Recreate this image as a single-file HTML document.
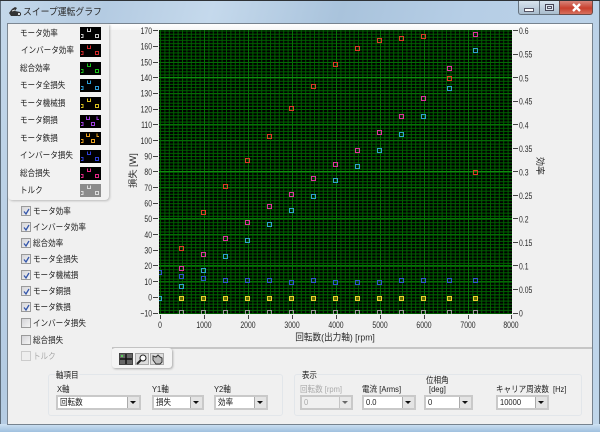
<!DOCTYPE html>
<html><head><meta charset="utf-8"><style>
html,body{margin:0;padding:0;width:600px;height:432px;overflow:hidden;background:#b9d1e8}
body{position:relative;font-family:"Liberation Sans","Noto Sans CJK JP",sans-serif;color:#222}
div,span{position:absolute;box-sizing:border-box}
.t{white-space:nowrap;font-size:8.7px;line-height:10px;height:10px;transform:scaleX(.87);transform-origin:0 50%}
.cb{left:21px;width:10px;height:10px;border:1px solid #9a9a9a;background:linear-gradient(135deg,#d4d4d8,#f4f4f4)}
.cb svg{position:absolute;left:0;top:0}
.sw{left:80px;width:21px;height:13px;background:#000}
.sw svg{position:absolute;left:0;top:0}
.cmb{height:15px;top:395px;background:#fff;border:2px solid #c9c9c9;outline:0}
.cmb i{position:absolute;right:0;top:0;width:11px;height:11px;background:#e4e4e4;border-left:1px solid #aaa}
.cmb i:after{content:"";position:absolute;left:2px;top:4px;border:3px solid transparent;border-top:3px solid #111;border-bottom:0}
.cmb span{left:2px;top:0;font-size:8.7px;line-height:11px;white-space:nowrap;transform:scaleX(.87);transform-origin:0 50%}
.grp{border:1px solid #e2e6ea;border-radius:3px;top:374px;height:42px}
.tb{top:353px;width:14px;height:12px;border:1px solid #aaa;background:#ddd}
</style></head><body>
<div style="left:0;top:0;width:600px;height:432px;background:linear-gradient(105deg,#c4d8ea 0%,#b4cbe2 15%,#c5d9ec 30%,#a9c3dc 48%,#b6cee6 66%,#c0d6ea 100%)"></div>
<div style="left:0;top:0;width:600px;height:1px;background:#2e3236"></div>
<div style="left:0;top:1px;width:1px;height:431px;background:#5d6c7a"></div>
<div style="left:599px;top:1px;width:1px;height:431px;background:#5d6c7a"></div>
<div style="left:0;top:424px;width:600px;height:8px;background:linear-gradient(#cfe2f3,#9fc0de)"></div>
<div style="left:7px;top:23px;width:586px;height:402px;background:#f0f0f0;border:1px solid #77838f"></div>
<div style="left:8px;top:24px;width:584px;height:6px;background:linear-gradient(#fff,#f6f6f6)"></div>

<svg style="position:absolute;left:8px;top:6px" width="14" height="11" viewBox="0 0 14 11"><path d="M1 7l3-4 3-2 2 1-2 3 5 1 1 3-4 1H3z" fill="#333"/><path d="M4 5l3-1" stroke="#ddd" stroke-width="1"/><circle cx="11" cy="8" r="1.6" fill="#eee" stroke="#333"/></svg>
<span class="t" style="left:23px;top:7px;font-size:9.8px;line-height:12px;height:12px;color:#2a2a2a;transform:scaleX(.9)">スイープ運転グラフ</span>

<div style="left:518px;top:1px;width:22px;height:14px;background:linear-gradient(#d8e4ee,#a9bccd);border:1px solid #66727e;border-top:0;border-radius:0 0 0 3px"></div>
<div style="left:525px;top:9px;width:8px;height:2px;background:#fff;border:0;outline:1px solid #556"></div>
<div style="left:540px;top:1px;width:19px;height:14px;background:linear-gradient(#d8e4ee,#a9bccd);border-bottom:1px solid #66727e"></div>
<div style="left:545px;top:4px;width:9px;height:7px;border:1px solid #445;background:#dfe8f0"></div>
<div style="left:547px;top:6px;width:5px;height:3px;border:1px solid #556"></div>
<div style="left:559px;top:1px;width:34px;height:14px;background:linear-gradient(#d8857a,#c8402e 55%,#d7705e);border:1px solid #6e4a46;border-top:0;border-radius:0 0 3px 0"></div>
<svg style="position:absolute;left:571px;top:3px" width="11" height="10"><path d="M2 1l7 7M9 1L2 8" stroke="#fff" stroke-width="2.4"/></svg>

<svg style="position:absolute;left:0;top:0" width="600" height="432" viewBox="0 0 600 432">
<defs>
<pattern id="v" x="160" y="0" width="44" height="10" patternUnits="userSpaceOnUse"><path d="M.5 0v10M4.9 0v10M9.3 0v10M13.7 0v10M18.1 0v10M22.5 0v10M26.9 0v10M31.3 0v10M35.7 0v10M40.1 0v10" stroke="#005c00" stroke-width="1"/></pattern>
<pattern id="h" x="0" y="30.5" width="10" height="15.7" patternUnits="userSpaceOnUse"><path d="M0 .5h10M0 3.64h10M0 6.78h10M0 9.92h10M0 13.06h10" stroke="#006400" stroke-width="1"/></pattern>
<clipPath id="c"><rect x="159" y="30" width="353" height="284"/></clipPath>
</defs>
<rect x="159" y="30" width="353" height="284" fill="#000"/>
<rect x="159" y="30" width="353" height="284" fill="url(#v)"/>
<rect x="159" y="30" width="353" height="284" fill="url(#h)"/>
<g shape-rendering="crispEdges">
<path d="M204.5 30v284M248.5 30v284M292.5 30v284M336.5 30v284M380.5 30v284M424.5 30v284M468.5 30v284" stroke="#067206" fill="none"/>
<path d="M159 62.5h353M159 93.5h353M159 140.5h353M159 187.5h353M159 234.5h353M159 281.5h353" stroke="#056a05" fill="none"/>
<path d="M159 124.5h353M159 218.5h353M159 265.5h353" stroke="#067006" fill="none"/>
<path d="M159 77.5h353M159 171.5h353" stroke="#0f8c0f" fill="none"/>
<path d="M153 30.5h5M153 46.5h5M153 62.5h5M153 77.5h5M153 93.5h5M153 109.5h5M153 124.5h5M153 140.5h5M153 156.5h5M153 171.5h5M153 187.5h5M153 203.5h5M153 218.5h5M153 234.5h5M153 250.5h5M153 265.5h5M153 281.5h5M153 297.5h5M153 313.5h5" stroke="#444"/>
<path d="M513 30.5h5M513 54.5h5M513 77.5h5M513 101.5h5M513 124.5h5M513 148.5h5M513 171.5h5M513 195.5h5M513 218.5h5M513 242.5h5M513 265.5h5M513 289.5h5M513 313.5h5" stroke="#444"/>
<path d="M160.5 315v4M204.5 315v4M248.5 315v4M292.5 315v4M336.5 315v4M380.5 315v4M424.5 315v4M468.5 315v4M511.5 315v4" stroke="#444"/>
<g clip-path="url(#c)">
<path fill="none" stroke="#9a9a9a" d="M179.5 310.5h4v4h-4zM201.5 310.5h4v4h-4zM223.5 310.5h4v4h-4zM245.5 310.5h4v4h-4zM267.5 310.5h4v4h-4zM289.5 310.5h4v4h-4zM311.5 310.5h4v4h-4zM333.5 310.5h4v4h-4zM355.5 310.5h4v4h-4zM377.5 310.5h4v4h-4zM399.5 310.5h4v4h-4zM421.5 310.5h4v4h-4zM447.5 310.5h4v4h-4zM473.5 310.5h4v4h-4z"/>
<path fill="#5a6a00" stroke="#f0d030" d="M179.5 296.5h4v4h-4zM201.5 296.5h4v4h-4zM223.5 296.5h4v4h-4zM245.5 296.5h4v4h-4zM267.5 296.5h4v4h-4zM289.5 296.5h4v4h-4zM311.5 296.5h4v4h-4zM333.5 296.5h4v4h-4zM355.5 296.5h4v4h-4zM377.5 296.5h4v4h-4zM399.5 296.5h4v4h-4zM421.5 296.5h4v4h-4zM447.5 296.5h4v4h-4zM473.5 296.5h4v4h-4z"/>
<path fill="none" stroke="#3050d0" d="M157.5 270.5h4v4h-4zM179.5 274.5h4v4h-4zM201.5 276.5h4v4h-4zM223.5 278.5h4v4h-4zM245.5 278.5h4v4h-4zM267.5 278.5h4v4h-4zM289.5 280.5h4v4h-4zM311.5 278.5h4v4h-4zM333.5 280.5h4v4h-4zM355.5 280.5h4v4h-4zM377.5 280.5h4v4h-4zM399.5 278.5h4v4h-4zM421.5 278.5h4v4h-4zM447.5 278.5h4v4h-4zM473.5 278.5h4v4h-4z"/>
<path fill="none" stroke="#30a0d0" d="M157.5 296.5h4v4h-4zM179.5 284.5h4v4h-4zM201.5 268.5h4v4h-4zM223.5 254.5h4v4h-4zM245.5 238.5h4v4h-4zM267.5 222.5h4v4h-4zM289.5 208.5h4v4h-4zM311.5 194.5h4v4h-4zM333.5 178.5h4v4h-4zM355.5 164.5h4v4h-4zM377.5 148.5h4v4h-4zM399.5 132.5h4v4h-4zM421.5 114.5h4v4h-4zM447.5 86.5h4v4h-4zM473.5 48.5h4v4h-4z"/>
<path fill="none" stroke="#e030a0" d="M179.5 266.5h4v4h-4zM201.5 252.5h4v4h-4zM223.5 236.5h4v4h-4zM245.5 220.5h4v4h-4zM267.5 204.5h4v4h-4zM289.5 192.5h4v4h-4zM311.5 176.5h4v4h-4zM333.5 162.5h4v4h-4zM355.5 148.5h4v4h-4zM377.5 130.5h4v4h-4zM399.5 114.5h4v4h-4zM421.5 96.5h4v4h-4zM447.5 66.5h4v4h-4zM473.5 32.5h4v4h-4z"/>
<path fill="none" stroke="#e03828" d="M179.5 246.5h4v4h-4zM201.5 210.5h4v4h-4zM223.5 184.5h4v4h-4zM245.5 158.5h4v4h-4zM267.5 134.5h4v4h-4zM289.5 106.5h4v4h-4zM311.5 84.5h4v4h-4zM333.5 62.5h4v4h-4zM355.5 46.5h4v4h-4zM377.5 38.5h4v4h-4zM399.5 36.5h4v4h-4zM421.5 34.5h4v4h-4zM447.5 76.5h4v4h-4zM473.5 170.5h4v4h-4z"/>
</g>
</g>
<g font-family="Liberation Sans" font-size="9.5" fill="#2a2a2a" text-anchor="end" transform="translate(152 0) scale(.72 1)">
<text x="0" y="34">170</text><text x="0" y="49.5">160</text><text x="0" y="65.5">150</text><text x="0" y="81">140</text><text x="0" y="96.5">130</text><text x="0" y="112.5">120</text><text x="0" y="128">110</text><text x="0" y="144">100</text><text x="0" y="159.5">90</text><text x="0" y="175">80</text><text x="0" y="191">70</text><text x="0" y="206.5">60</text><text x="0" y="222">50</text><text x="0" y="238">40</text><text x="0" y="253.5">30</text><text x="0" y="269">20</text><text x="0" y="285">10</text><text x="0" y="300.5">0</text><text x="0" y="316.5">−10</text>
</g>
<g font-family="Liberation Sans" font-size="9.5" fill="#2a2a2a" transform="translate(519 0) scale(.72 1)">
<text x="0" y="34">0.6</text><text x="0" y="57.5">0.55</text><text x="0" y="81.5">0.5</text><text x="0" y="104.5">0.45</text><text x="0" y="128.5">0.4</text><text x="0" y="152">0.35</text><text x="0" y="175.5">0.3</text><text x="0" y="199">0.25</text><text x="0" y="222.5">0.2</text><text x="0" y="246">0.15</text><text x="0" y="269.5">0.1</text><text x="0" y="293">0.05</text><text x="0" y="316.5">0</text>
</g>
<g font-family="Liberation Sans" font-size="9.5" fill="#2a2a2a" text-anchor="middle" transform="scale(.72 1)">
<text x="222.2" y="328">0</text><text x="283.3" y="328">1000</text><text x="344.4" y="328">2000</text><text x="405.6" y="328">3000</text><text x="466.7" y="328">4000</text><text x="527.8" y="328">5000</text><text x="588.9" y="328">6000</text><text x="650" y="328">7000</text><text x="709.7" y="328">8000</text>
</g>
<text transform="translate(335,340.5) scale(.92 1)" text-anchor="middle" font-family="Liberation Sans,Noto Sans CJK JP,sans-serif" font-size="9.4" fill="#2a2a2a">回転数(出力軸) [rpm]</text>
<text transform="translate(136,170.5) rotate(-90)" text-anchor="middle" font-family="Liberation Sans,Noto Sans CJK JP,sans-serif" font-size="9.2" fill="#2a2a2a">損失 [W]</text>
<text transform="translate(537,166) rotate(90)" text-anchor="middle" font-family="Liberation Sans,Noto Sans CJK JP,sans-serif" font-size="9" fill="#2a2a2a">効率</text>
</svg>

<div style="left:8px;top:24px;width:101px;height:176px;background:#f2f2f2;border-radius:0 0 4px 4px;box-shadow:1px 1px 2px #bbb"></div>
<span class="t" style="left:20px;top:28px">モータ効率</span>
<span class="t" style="left:21px;top:45px">インバータ効率</span>
<span class="t" style="left:20px;top:63px">総合効率</span>
<span class="t" style="left:20px;top:80px">モータ全損失</span>
<span class="t" style="left:20px;top:98px">モータ機械損</span>
<span class="t" style="left:20px;top:115px">モータ銅損</span>
<span class="t" style="left:20px;top:133px">モータ鉄損</span>
<span class="t" style="left:20px;top:150px">インバータ損失</span>
<span class="t" style="left:20px;top:168px">総合損失</span>
<span class="t" style="left:20px;top:185px">トルク</span>

<div class="sw" style="top:27px;color:#ccc"><svg width="21" height="13"><path d="M7.5 1.5v3h3v-3M1 7.5h2v3H1M15.5 7.5h3v3h-3z" fill="none" stroke="currentColor"/></svg></div>
<div class="sw" style="top:44px;color:#d02828"><svg width="21" height="13"><path d="M7.5 1.5v3h3v-3M1 7.5h2v3H1M15.5 7.5h3v3h-3z" fill="none" stroke="currentColor"/></svg></div>
<div class="sw" style="top:62px;color:#18c018"><svg width="21" height="13"><path d="M7.5 1.5v3h3v-3M1 7.5h2v3H1M15.5 7.5h3v3h-3z" fill="none" stroke="currentColor"/></svg></div>
<div class="sw" style="top:79px;color:#30a0d8"><svg width="21" height="13"><path d="M7.5 1.5v3h3v-3M1 7.5h2v3H1M15.5 7.5h3v3h-3z" fill="none" stroke="currentColor"/></svg></div>
<div class="sw" style="top:97px;color:#d8c020"><svg width="21" height="13"><path d="M7.5 1.5v3h3v-3M1 7.5h2v3H1M15.5 7.5h3v3h-3z" fill="none" stroke="currentColor"/></svg></div>
<div class="sw" style="top:115px;color:#a040e0"><svg width="21" height="13"><path d="M6.5 1.5v3h3v-3M17 1.5v3h2M1 7.5h2v3H1M11.5 7.5h3v3h-3z" fill="none" stroke="currentColor"/></svg></div>
<div class="sw" style="top:132px;color:#e8a020"><svg width="21" height="13"><path d="M6.5 1.5v3h3v-3M17 1.5v3h2M1 7.5h2v3H1M11.5 7.5h3v3h-3z" fill="none" stroke="currentColor"/></svg></div>
<div class="sw" style="top:150px;color:#3040d8"><svg width="21" height="13"><path d="M7.5 1.5v3h3v-3M1 7.5h2v3H1M15.5 7.5h3v3h-3z" fill="none" stroke="currentColor"/></svg></div>
<div class="sw" style="top:167px;color:#e82888"><svg width="21" height="13"><path d="M7.5 1.5v3h3v-3M1 7.5h2v3H1M15.5 7.5h3v3h-3z" fill="none" stroke="currentColor"/></svg></div>
<div class="sw" style="top:184px;color:#ddd;background:#8c8c8c"><svg width="21" height="13"><path d="M7.5 1.5v3h3v-3M1 7.5h2v3H1M15.5 7.5h3v3h-3z" fill="none" stroke="currentColor"/></svg></div>

<div class="cb" style="top:206px"><svg width="9" height="9"><path d="M2 4.5l2 2.5 3-5" fill="none" stroke="#3355aa" stroke-width="1.3"/></svg></div>
<div class="cb" style="top:222px"><svg width="9" height="9"><path d="M2 4.5l2 2.5 3-5" fill="none" stroke="#3355aa" stroke-width="1.3"/></svg></div>
<div class="cb" style="top:238px"><svg width="9" height="9"><path d="M2 4.5l2 2.5 3-5" fill="none" stroke="#3355aa" stroke-width="1.3"/></svg></div>
<div class="cb" style="top:254px"><svg width="9" height="9"><path d="M2 4.5l2 2.5 3-5" fill="none" stroke="#3355aa" stroke-width="1.3"/></svg></div>
<div class="cb" style="top:270px"><svg width="9" height="9"><path d="M2 4.5l2 2.5 3-5" fill="none" stroke="#3355aa" stroke-width="1.3"/></svg></div>
<div class="cb" style="top:286px"><svg width="9" height="9"><path d="M2 4.5l2 2.5 3-5" fill="none" stroke="#3355aa" stroke-width="1.3"/></svg></div>
<div class="cb" style="top:302px"><svg width="9" height="9"><path d="M2 4.5l2 2.5 3-5" fill="none" stroke="#3355aa" stroke-width="1.3"/></svg></div>
<div class="cb" style="top:318px"></div>
<div class="cb" style="top:335px"></div>
<div class="cb" style="top:351px;border-color:#ccc;background:#eee"></div>
<span class="t" style="left:33px;top:206px">モータ効率</span>
<span class="t" style="left:33px;top:222px">インバータ効率</span>
<span class="t" style="left:33px;top:238px">総合効率</span>
<span class="t" style="left:33px;top:254px">モータ全損失</span>
<span class="t" style="left:33px;top:270px">モータ機械損</span>
<span class="t" style="left:33px;top:286px">モータ銅損</span>
<span class="t" style="left:33px;top:302px">モータ鉄損</span>
<span class="t" style="left:33px;top:318px">インバータ損失</span>
<span class="t" style="left:33px;top:335px">総合損失</span>
<span class="t" style="left:33px;top:351px;color:#aaa">トルク</span>

<div style="left:112px;top:347px;width:480px;height:2px;background:#c6c6c6"></div>

<div style="left:112px;top:348px;width:60px;height:20px;background:#f4f4f4;border-radius:3px;box-shadow:1px 1px 2px #aaa"></div>
<div class="tb" style="left:119px;background:#666;border-color:#444"></div>
<svg style="position:absolute;left:119px;top:353px" width="46" height="12"><path d="M1 6h12M7 1v10" stroke="#111" stroke-width="1.5"/><rect x="2" y="2" width="2" height="2" fill="#5c5"/></svg>
<div class="tb" style="left:135px"></div>
<svg style="position:absolute;left:135px;top:353px" width="14" height="12"><circle cx="8" cy="5" r="3" fill="#fff" stroke="#222"/><path d="M6 7L2 11" stroke="#222" stroke-width="2"/></svg>
<div class="tb" style="left:150px"></div>
<svg style="position:absolute;left:150px;top:353px" width="14" height="12"><path d="M3 3l3 1 2-2 2 2 2 1v4l-2 2H6L3 7z" fill="#bbb" stroke="#333" stroke-width="1"/></svg>

<div class="grp" style="left:48px;width:235px"></div>
<span class="t" style="left:55px;top:370px;background:#f0f0f0;padding:0 1px">軸項目</span>
<span class="t" style="left:57px;top:384px">X軸</span>
<span class="t" style="left:152px;top:384px">Y1軸</span>
<span class="t" style="left:214px;top:384px">Y2軸</span>
<div class="cmb" style="left:56px;width:85px"><span>回転数</span><i></i></div>
<div class="cmb" style="left:152px;width:52px"><span>損失</span><i></i></div>
<div class="cmb" style="left:214px;width:54px"><span>効率</span><i></i></div>

<div class="grp" style="left:294px;width:288px"></div>
<span class="t" style="left:301px;top:370px;background:#f0f0f0;padding:0 1px">表示</span>
<span class="t" style="left:300px;top:384px;color:#aaa">回転数 [rpm]</span>
<span class="t" style="left:362px;top:384px">電流 [Arms]</span>
<span class="t" style="left:426px;top:375px">位相角</span>
<span class="t" style="left:429px;top:384px">[deg]</span>
<span class="t" style="left:496px;top:384px">キャリア周波数</span>
<span class="t" style="left:553px;top:384px">[Hz]</span>
<div class="cmb" style="left:300px;width:53px;background:#f0f0f0"><span style="color:#aaa">0</span><i style="opacity:.6"></i></div>
<div class="cmb" style="left:362px;width:54px"><span>0.0</span><i></i></div>
<div class="cmb" style="left:424px;width:49px"><span>0</span><i></i></div>
<div class="cmb" style="left:496px;width:53px"><span>10000</span><i></i></div>
</body></html>
